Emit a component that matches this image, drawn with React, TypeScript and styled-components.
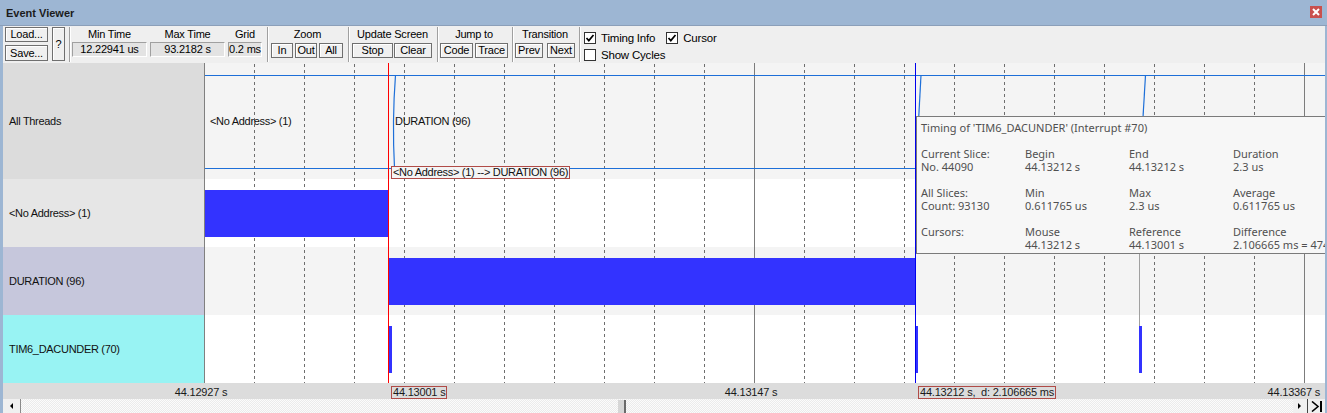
import React from "react";
import styled, { createGlobalStyle } from "styled-components";

const GlobalStyle = createGlobalStyle`
  html, body { margin: 0; padding: 0; background: #fff; overflow: hidden; }
  body { font-family: "Liberation Sans", Arial, sans-serif; }
  * { box-sizing: border-box; }
`;

const FRAME = "#9db6d3";
const UI_FONT = `"Liberation Sans", Arial, sans-serif`;

const Window = styled.div`
  width: 1327px;
  height: 413px;
  display: flex;
  flex-direction: column;
  background: ${FRAME};
  overflow: hidden;
`;

const TitleBar = styled.div`
  height: 26px;
  flex: none;
  display: flex;
  align-items: center;
  justify-content: space-between;
  padding: 0 5px 0 6px;
  border-bottom: 1px solid #8b9fb9;
`;

const Title = styled.span`
  font: bold 11px ${UI_FONT};
  color: #1b1b1b;
`;

const CloseBtn = styled.div`
  width: 12px;
  height: 12px;
  margin-top: -2px;
  background: #c9504e;
  display: flex;
  align-items: center;
  justify-content: center;
`;

const Body = styled.div`
  flex: 1;
  display: flex;
  flex-direction: column;
  padding: 0 2px 0 3px;
`;

const Toolbar = styled.div`
  height: 37px;
  flex: none;
  display: flex;
  align-items: flex-start;
  background: #efefef;
  padding: 1px 0 0 2px;
  font: 11px ${UI_FONT};
  letter-spacing: -0.2px;
  color: #000;
`;

const FileGroup = styled.div`
  width: 60px;
  display: flex;
  gap: 4px;
`;

const FileCol = styled.div`
  display: flex;
  flex-direction: column;
  gap: 3px;
`;

const Btn = styled.div<{ $w: number; $h?: number }>`
  width: ${(p) => p.$w}px;
  height: ${(p) => p.$h ?? 15}px;
  flex: none;
  display: flex;
  align-items: center;
  justify-content: center;
  background: #f0f0f0;
  border: 1px solid #6f6f6f;
  box-shadow: inset 1px 1px 0 #ffffff;
  line-height: 1;
  white-space: nowrap;
`;

const Sep = styled.div`
  width: 2px;
  height: 35px;
  flex: none;
  margin: 0 1px 0 4px;
  border-left: 1px solid #a0a0a0;
  border-right: 1px solid #ffffff;
`;

const Group = styled.div<{ $w: number; $pl?: number }>`
  width: ${(p) => p.$w}px;
  flex: none;
  display: flex;
  flex-direction: column;
  padding-left: ${(p) => p.$pl ?? 0}px;
`;

const GLabel = styled.div`
  height: 15px;
  line-height: 15px;
  text-align: center;
  white-space: nowrap;
`;

const BtnRow = styled.div<{ $gap: number }>`
  display: flex;
  gap: ${(p) => p.$gap}px;
  margin-top: 1px;
`;

const TimeCols = styled.div`
  display: flex;
  gap: 3px;
`;

const TimeCol = styled.div<{ $w: number }>`
  width: ${(p) => p.$w}px;
  display: flex;
  flex-direction: column;
`;

const ValueBox = styled.div`
  height: 15px;
  background: #e3e3e3;
  border-top: 1px solid #a0a0a0;
  border-left: 1px solid #a0a0a0;
  border-bottom: 1px solid #ffffff;
  border-right: 1px solid #ffffff;
  text-align: center;
  line-height: 13px;
  white-space: nowrap;
`;

const Checks = styled.div`
  display: flex;
  flex-direction: column;
  gap: 5px;
  padding: 5px 0 0 2px;
`;

const CheckRow = styled.div`
  display: flex;
  align-items: center;
  height: 12px;
`;

const CheckItem = styled.div<{ $ml?: number }>`
  display: flex;
  align-items: center;
  margin-left: ${(p) => p.$ml ?? 0}px;
`;

const Box = styled.span`
  width: 12px;
  height: 12px;
  background: #fff;
  border: 1px solid #333;
  display: flex;
  align-items: center;
  justify-content: center;
`;

const CheckText = styled.span`
  margin-left: 5px;
  font-size: 11.5px;
  white-space: nowrap;
`;

const Main = styled.div`
  height: 320px;
  flex: none;
  display: flex;
`;

const LabelCol = styled.div`
  width: 202px;
  flex: none;
  display: flex;
  flex-direction: column;
  border-right: 1px solid #808080;
`;

const LabelRow = styled.div<{ $h: number; $bg: string }>`
  height: ${(p) => p.$h}px;
  background: ${(p) => p.$bg};
  display: flex;
  align-items: center;
  padding-left: 6px;
  font: 11px ${UI_FONT};
  letter-spacing: -0.3px;
  color: #111;
  white-space: nowrap;
`;

const PlotCol = styled.div`
  flex: 1;
  position: relative;
  overflow: hidden;
  display: flex;
  flex-direction: column;
`;

const PlotRow = styled.div<{ $h: number; $bg: string }>`
  height: ${(p) => p.$h}px;
  background: ${(p) => p.$bg};
  position: relative;
  flex: none;
`;

const Overlay = styled.svg<{ $z: number }>`
  position: absolute;
  left: 0;
  top: 0;
  z-index: ${(p) => p.$z};
  pointer-events: none;
`;

const Bar = styled.div<{ $top: number; $h: number }>`
  position: absolute;
  top: ${(p) => p.$top}px;
  height: ${(p) => p.$h}px;
  background: #3333ff;
  z-index: 2;
`;

const SegText = styled.span`
  position: absolute;
  top: 52px;
  line-height: 14px;
  font: 11px ${UI_FONT};
  letter-spacing: -0.3px;
  color: #111;
  white-space: nowrap;
  z-index: 2;
`;

const TransitionTag = styled.span`
  position: absolute;
  left: 186px;
  top: 103px;
  height: 13px;
  padding: 0 1px;
  border: 1px solid #b04b47;
  background: #f4f4f4;
  font: 11px ${UI_FONT};
  letter-spacing: -0.3px;
  line-height: 11px;
  color: #111;
  white-space: nowrap;
  z-index: 3;
`;

const Tip = styled.div`
  position: absolute;
  left: 711px;
  top: 53px;
  width: 430px;
  height: 138px;
  background: #f7f7f7;
  border: 1px solid #7a7a7a;
  border-right: none;
  padding: 4px 0 0 4px;
  z-index: 4;
  font: 11px "Noto Sans", "Open Sans", sans-serif;
  line-height: 13px;
  color: #505050;
  white-space: nowrap;
`;

const TipHeader = styled.div`
  height: 13px;
`;

const TipGrid = styled.div`
  display: grid;
  grid-template-columns: 104px 104px 104px 130px;
  margin-top: 13px;
`;

const TipCell = styled.div`
  display: flex;
  flex-direction: column;
`;

const Axis = styled.div`
  height: 16px;
  flex: none;
  position: relative;
  background: #dcdcdc;
  font: 11px ${UI_FONT};
  letter-spacing: -0.2px;
  color: #1a1a1a;
`;

const AxisLabel = styled.span`
  position: absolute;
  top: 3px;
  line-height: 13px;
  white-space: nowrap;
  transform: translateX(-50%);
`;

const AxisLabelEnd = styled.span`
  position: absolute;
  top: 3px;
  right: 5px;
  line-height: 13px;
  white-space: nowrap;
`;

const CursorTag = styled.span`
  position: absolute;
  top: 3px;
  height: 13px;
  padding: 0 1px;
  border: 1px solid #b04b47;
  line-height: 11px;
  white-space: nowrap;
`;

const Scroll = styled.div`
  height: 14px;
  flex: none;
  display: flex;
  background: repeating-conic-gradient(#ebebeb 0 25%, #fbfbfb 0 50%) 0 0 / 2px 2px;
`;

const ScrollBtn = styled.div<{ $w: number }>`
  width: ${(p) => p.$w}px;
  height: 14px;
  flex: none;
  display: flex;
  align-items: center;
  justify-content: center;
  background: #f0f0f0;
`;

const Track = styled.div`
  flex: 1;
  position: relative;
`;

const Thumb = styled.div`
  position: absolute;
  top: 1px;
  bottom: 0;
  width: 8px;
  background: #d6d6d6;
  border-right: 2px solid #6a6a6a;
`;

const Check = ({ on }: { on: boolean }) => (
  <Box>
    {on && (
      <svg width="10" height="10" viewBox="0 0 10 10">
        <path d="M1.5 5 L3.8 7.6 L8.5 2" fill="none" stroke="#000" strokeWidth="1.7" />
      </svg>
    )}
  </Box>
);

const PLOT_W = 1120;
const PLOT_H = 320;
const gridXs = Array.from({ length: 22 }, (_, k) => 49 + 50 * k);
const majorXs = new Set([549, 1099]);

const rows = [
  { name: "All Threads", h: 116, labelBg: "#dcdcdc", plotBg: "#f4f4f4" },
  { name: "<No Address> (1)", h: 68, labelBg: "#e6e6e6", plotBg: "#ffffff" },
  { name: "DURATION (96)", h: 68, labelBg: "#c6c7dc", plotBg: "#f4f4f4" },
  { name: "TIM6_DACUNDER (70)", h: 68, labelBg: "#98f3f3", plotBg: "#ffffff" },
];

const bars: { row: number; left: number; width: number }[] = [
  { row: 1, left: 0, width: 184 },
  { row: 2, left: 184, width: 527 },
  { row: 3, left: 184, width: 3 },
  { row: 3, left: 710, width: 3 },
  { row: 3, left: 934, width: 3 },
];

const BUS = "#1d6fd8";

export default function App() {
  return (
    <>
      <GlobalStyle />
      <Window>
        <TitleBar>
          <Title>Event Viewer</Title>
          <CloseBtn>
            <svg width="8" height="8" viewBox="0 0 8 8">
              <path d="M1 1 L7 7 M7 1 L1 7" stroke="#fff" strokeWidth="2" />
            </svg>
          </CloseBtn>
        </TitleBar>
        <Body>
          <Toolbar>
            <FileGroup>
              <FileCol>
                <Btn $w={43} $h={15}>Load...</Btn>
                <Btn $w={43} $h={16}>Save...</Btn>
              </FileCol>
              <Btn $w={13} $h={34}>?</Btn>
            </FileGroup>
            <Sep />
            <Group $w={191}>
              <TimeCols>
                <TimeCol $w={75}>
                  <GLabel>Min Time</GLabel>
                  <ValueBox>12.22941 us</ValueBox>
                </TimeCol>
                <TimeCol $w={75}>
                  <GLabel>Max Time</GLabel>
                  <ValueBox>93.2182 s</ValueBox>
                </TimeCol>
                <TimeCol $w={34}>
                  <GLabel>Grid</GLabel>
                  <ValueBox>0.2 ms</ValueBox>
                </TimeCol>
              </TimeCols>
            </Group>
            <Sep />
            <Group $w={74} $pl={1}>
              <GLabel>Zoom</GLabel>
              <BtnRow $gap={2}>
                <Btn $w={22}>In</Btn>
                <Btn $w={22}>Out</Btn>
                <Btn $w={24}>All</Btn>
              </BtnRow>
            </Group>
            <Sep />
            <Group $w={82} $pl={1}>
              <GLabel>Update Screen</GLabel>
              <BtnRow $gap={1}>
                <Btn $w={41}>Stop</Btn>
                <Btn $w={38}>Clear</Btn>
              </BtnRow>
            </Group>
            <Sep />
            <Group $w={68}>
              <GLabel>Jump to</GLabel>
              <BtnRow $gap={2}>
                <Btn $w={33}>Code</Btn>
                <Btn $w={33}>Trace</Btn>
              </BtnRow>
            </Group>
            <Sep />
            <Group $w={60}>
              <GLabel>Transition</GLabel>
              <BtnRow $gap={4}>
                <Btn $w={28}>Prev</Btn>
                <Btn $w={28}>Next</Btn>
              </BtnRow>
            </Group>
            <Sep />
            <Checks>
              <CheckRow>
                <CheckItem>
                  <Check on />
                  <CheckText>Timing Info</CheckText>
                </CheckItem>
                <CheckItem $ml={11}>
                  <Check on />
                  <CheckText>Cursor</CheckText>
                </CheckItem>
              </CheckRow>
              <CheckRow>
                <CheckItem>
                  <Check on={false} />
                  <CheckText>Show Cycles</CheckText>
                </CheckItem>
              </CheckRow>
            </Checks>
          </Toolbar>

          <Main>
            <LabelCol>
              {rows.map((r) => (
                <LabelRow key={r.name} $h={r.h} $bg={r.labelBg}>
                  {r.name}
                </LabelRow>
              ))}
            </LabelCol>
            <PlotCol>
              <Overlay $z={1} width={PLOT_W} height={PLOT_H}>
                {gridXs.map((x) =>
                  majorXs.has(x) ? (
                    <line key={x} x1={x + 0.5} x2={x + 0.5} y1={0} y2={PLOT_H} stroke="#7c7c7c" />
                  ) : (
                    <line
                      key={x}
                      x1={x + 0.5}
                      x2={x + 0.5}
                      y1={1}
                      y2={PLOT_H}
                      stroke="#6e6e6e"
                      strokeDasharray="3 3"
                    />
                  )
                )}
              </Overlay>

              {rows.map((r, i) => (
                <PlotRow key={r.name} $h={r.h} $bg={r.plotBg}>
                  {i === 0 && (
                    <>
                      <SegText style={{ left: 5 }}>&lt;No Address&gt; (1)</SegText>
                      <SegText style={{ left: 190 }}>DURATION (96)</SegText>
                      <TransitionTag>&lt;No Address&gt; (1) --&gt; DURATION (96)</TransitionTag>
                    </>
                  )}
                  {bars
                    .filter((b) => b.row === i)
                    .map((b, j) => (
                      <Bar key={j} $top={11} $h={47} style={{ left: b.left, width: b.width }} />
                    ))}
                </PlotRow>
              ))}

              <Overlay $z={2} width={PLOT_W} height={PLOT_H}>
                <line x1={0} x2={PLOT_W} y1={12.5} y2={12.5} stroke={BUS} strokeWidth="1.2" />
                <line x1={0} x2={PLOT_W} y1={105.5} y2={105.5} stroke={BUS} strokeWidth="1.2" />
                <path d="M190.5 12 Q187 58 189.5 105" fill="none" stroke={BUS} strokeWidth="1.2" />
                <path d="M716 12 L711 105" fill="none" stroke={BUS} strokeWidth="1.2" />
                <path d="M940.5 12 L935 105" fill="none" stroke={BUS} strokeWidth="1.2" />
              </Overlay>

              <Overlay $z={3} width={PLOT_W} height={PLOT_H}>
                <line x1={183.5} x2={183.5} y1={0} y2={PLOT_H} stroke="#ff0000" />
                <line x1={710.5} x2={710.5} y1={0} y2={PLOT_H} stroke="#0000ee" />
                <line x1={934.5} x2={934.5} y1={184} y2={263} stroke="#a0a0a0" />
              </Overlay>

              <Tip>
                <TipHeader>Timing of 'TIM6_DACUNDER' (Interrupt #70)</TipHeader>
                <TipGrid>
                  <TipCell><span>Current Slice:</span><span>No. 44090</span></TipCell>
                  <TipCell><span>Begin</span><span>44.13212 s</span></TipCell>
                  <TipCell><span>End</span><span>44.13212 s</span></TipCell>
                  <TipCell><span>Duration</span><span>2.3 us</span></TipCell>
                </TipGrid>
                <TipGrid>
                  <TipCell><span>All Slices:</span><span>Count: 93130</span></TipCell>
                  <TipCell><span>Min</span><span>0.611765 us</span></TipCell>
                  <TipCell><span>Max</span><span>2.3 us</span></TipCell>
                  <TipCell><span>Average</span><span>0.611765 us</span></TipCell>
                </TipGrid>
                <TipGrid>
                  <TipCell><span>Cursors:</span></TipCell>
                  <TipCell><span>Mouse</span><span>44.13212 s</span></TipCell>
                  <TipCell><span>Reference</span><span>44.13001 s</span></TipCell>
                  <TipCell><span>Difference</span><span>2.106665 ms = 474.68 Hz</span></TipCell>
                </TipGrid>
              </Tip>
            </PlotCol>
          </Main>

          <Axis>
            <AxisLabel style={{ left: 198 }}>44.12927 s</AxisLabel>
            <AxisLabel style={{ left: 748 }}>44.13147 s</AxisLabel>
            <AxisLabelEnd>44.13367 s</AxisLabelEnd>
            <CursorTag style={{ left: 388 }}>44.13001 s</CursorTag>
            <CursorTag style={{ left: 915 }}>44.13212 s,&nbsp; d: 2.106665 ms</CursorTag>
          </Axis>

          <Scroll>
            <ScrollBtn $w={18} style={{ borderRight: "1px solid #8a8a8a" }}>
              <svg width="4" height="6" viewBox="0 0 4 6">
                <path d="M3 0 L0 3 L3 6 Z" fill="#000" />
              </svg>
            </ScrollBtn>
            <Track>
              <Thumb style={{ left: 597 }} />
            </Track>
            <ScrollBtn $w={15} style={{ borderRight: "1px solid #444" }}>
              <svg width="4" height="6" viewBox="0 0 4 6">
                <path d="M0 0 L3 3 L0 6 Z" fill="#000" />
              </svg>
            </ScrollBtn>
            <ScrollBtn $w={17}>
              <svg width="13" height="11" viewBox="0 0 13 11">
                <path d="M2 0.5 L8 5.5 L2 10.5" fill="none" stroke="#000" strokeWidth="1.6" />
                <path d="M11 0 L11 11" stroke="#000" strokeWidth="2" />
              </svg>
            </ScrollBtn>
          </Scroll>
        </Body>
      </Window>
    </>
  );
}
